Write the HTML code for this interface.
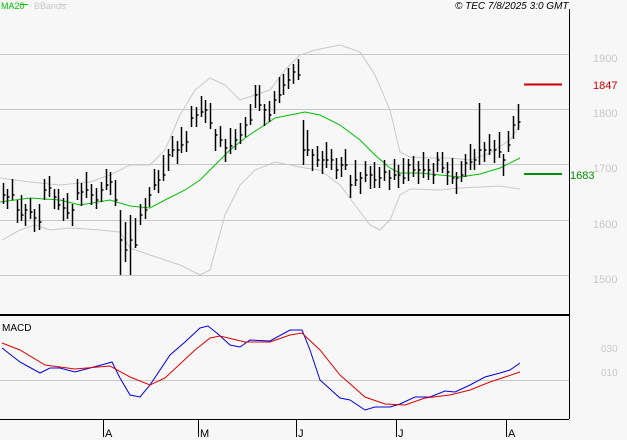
<!DOCTYPE html>
<html><head><meta charset="utf-8"><style>
body{margin:0;background:#f7f7f7;width:627px;height:440px;overflow:hidden;font-family:"Liberation Sans",sans-serif}
svg{position:absolute;left:0;top:0}
</style></head><body>
<svg id="s" width="627" height="440" xmlns="http://www.w3.org/2000/svg">
<rect width="627" height="440" fill="#f7f7f7"/>
<g stroke="#c8c8c8" stroke-width="1">
<line x1="0" y1="54.5" x2="569" y2="54.5"/><line x1="0" y1="109.5" x2="569" y2="109.5"/>
<line x1="0" y1="164.5" x2="569" y2="164.5"/><line x1="0" y1="220.5" x2="569" y2="220.5"/>
<line x1="0" y1="275.5" x2="569" y2="275.5"/><line x1="0" y1="380.5" x2="569" y2="380.5"/>
</g>
<polyline fill="none" stroke="#c8c8c8" points="0,178 30,182 60,185 90,182 110,175 130,165 150,165 165,150 180,115 195,90 210,78 225,85 240,100 255,95 270,90 285,70 300,55 315,50 340,45 360,52 375,75 390,110 400,152 410,157 430,158 450,158 470,160 490,153 510,140 520,125"/>
<polyline fill="none" stroke="#c8c8c8" points="2,240 20,230 35,225 50,230 70,228 100,230 120,232 130,248 150,255 180,265 200,275 210,270 225,215 240,185 255,170 275,162 290,165 305,168 320,170 340,185 355,205 370,225 380,230 390,220 400,195 410,189 440,190 460,188 480,187 500,186 520,189"/>
<polyline fill="none" stroke="#00c000" points="0,202 30,198 60,200 80,205 110,200 130,206 150,208 165,200 185,190 200,180 215,165 230,150 245,138 260,128 275,118 290,115 305,112 320,115 340,125 360,140 375,155 390,168 400,173 420,173 440,175 460,177 480,174 500,168 520,158"/>
<g id="bars" stroke="#000" stroke-width="1.5"></g>
<line x1="524" y1="84.5" x2="562" y2="84.5" stroke="#cc0000" stroke-width="2"/>
<line x1="524" y1="174" x2="562" y2="174" stroke="#009000" stroke-width="2"/>
<line x1="569.5" y1="9" x2="569.5" y2="419" stroke="#000"/>
<line x1="0" y1="315" x2="569" y2="315" stroke="#000" stroke-width="2"/>
<line x1="0" y1="419.5" x2="569" y2="419.5" stroke="#000"/>
<g stroke="#000"><line x1="103.5" y1="419" x2="103.5" y2="437"/><line x1="198.5" y1="419" x2="198.5" y2="437"/><line x1="296.5" y1="419" x2="296.5" y2="437"/><line x1="396.5" y1="419" x2="396.5" y2="437"/><line x1="506.5" y1="419" x2="506.5" y2="437"/></g>
<polyline fill="none" stroke="#0000dd" points="2,348 20,362 40,373 50,368 60,368 75,372 90,368 105,364 112,362 120,378 130,395 140,397 150,385 170,355 185,342 200,328 208,326 218,334 230,345 240,347 250,340 270,341 290,330 302,330 310,350 320,380 340,398 350,400 365,410 375,407 390,407 400,404 415,397 430,397 445,391 455,392 470,385 485,377 500,373 510,370 520,363"/>
<polyline fill="none" stroke="#dd0000" points="2,343 20,350 45,365 60,367 75,369 110,366 130,377 150,385 165,378 195,350 210,338 220,336 245,342 270,342 290,335 302,333 320,350 340,375 365,397 385,404 405,405 425,398 450,395 470,390 490,382 520,372"/>
<g font-size="11" fill="#c8c8c8">
<text x="593" y="62">1900</text><text x="593" y="117">1800</text><text x="593" y="172">1700</text><text x="593" y="228">1600</text><text x="593" y="283">1500</text>
<text x="601" y="352" font-size="10">030</text><text x="601" y="376" font-size="10">010</text>
</g>
<text x="593" y="89" font-size="11" fill="#cc0000">1847</text>
<text x="570" y="179" font-size="11" fill="#009000">1683</text>
<text x="2" y="331" font-size="10" fill="#000">MACD</text>
<g font-size="11" fill="#000"><text x="105" y="437">A</text><text x="200" y="437">M</text><text x="298" y="437">J</text><text x="398" y="437">J</text><text x="508" y="437">A</text></g>
<text x="1" y="9" font-size="9" fill="#00c000">MA20</text><line x1="21" y1="4.5" x2="28" y2="4.5" stroke="#00c000"/>
<text x="34" y="9" font-size="9" fill="#c8c8c8">BBands</text><line x1="60" y1="4.5" x2="67" y2="4.5" stroke="#c8c8c8"/>
<text x="455" y="9" font-size="10" font-style="italic" fill="#000">© TEC 7/8/2025 3:0 GMT</text>
</svg>
<script>
var c=[[3,195],[7,197],[12,195],[17,210],[21,215],[25,210],[30,212],[34,218],[39,222],[44,190],[49,188],[54,197],[58,205],[63,208],[67,213],[72,210],[77,193],[81,192],[86,190],[91,195],[96,200],[101,190],[106,185],[110,182],[115,200],[120,240],[125,250],[130,240],[135,245],[140,215],[145,210],[149,195],[154,185],[158,180],[163,175],[168,155],[172,150],[177,150],[181,145],[186,142],[191,118],[196,115],[201,112],[205,110],[210,123],[215,135],[220,140],[225,148],[230,146],[235,140],[240,135],[245,125],[250,120],[255,95],[259,105],[264,110],[269,115],[274,100],[279,95],[283,85],[288,80],[293,72],[298,75],[303,150],[307,150],[312,155],[317,160],[322,160],[326,160],[331,160],[336,170],[341,165],[345,165],[350,185],[355,180],[360,178],[365,175],[370,175],[374,180],[379,178],[384,172],[389,178],[394,175],[398,175],[403,178],[408,165],[413,170],[418,170],[423,170],[428,170],[433,175],[437,160],[442,168],[447,172],[452,178],[456,178],[461,175],[465,163],[470,162],[474,160],[479,150],[484,150],[489,150],[494,150],[499,152],[503,160],[508,145],[513,125],[518,122]];
var big={120:[210,275],125:[222,262],130:[215,275],303:[120,165],479:[103,165],135:[218,248]};
var g=document.getElementById('bars'),h='';
var up=[12,8,16,10,20,6,14,9,18,11],dn=[9,14,6,12,8,16,5,10,7,13];
for(var i=0;i<c.length;i++){var x=c[i][0]+.5,y=c[i][1],hi=y-up[i%10],lo=y+dn[(i*3)%10];
if(big[c[i][0]]){hi=big[c[i][0]][0];lo=big[c[i][0]][1];}
h+='<line x1="'+x+'" y1="'+hi+'" x2="'+x+'" y2="'+lo+'"/><line x1="'+x+'" y1="'+y+'" x2="'+(x+2)+'" y2="'+y+'"/>';}
g.innerHTML=h;
</script>
</body></html>
